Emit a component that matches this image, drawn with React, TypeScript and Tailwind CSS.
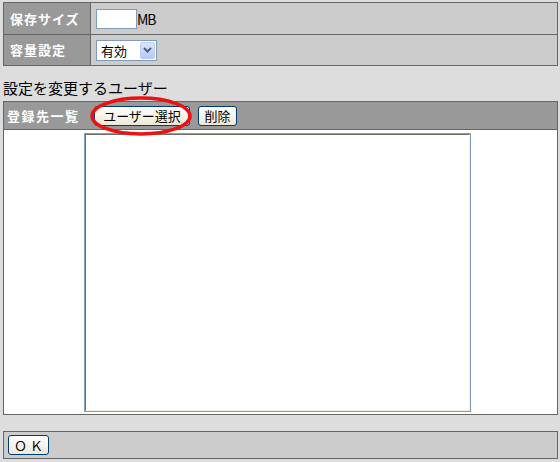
import React from "react";

const font = { fontFamily: '"Noto Sans CJK JP", "Noto Sans", sans-serif' };

const XpButton: React.FC<{ label: string; className?: string }> = ({
  label,
  className,
}) => (
  <button
    type="button"
    className={
      "flex h-[20px] items-center justify-center rounded-[3px] border border-[#003c74] bg-gradient-to-b from-white to-[#ece9d8] text-[13px] leading-none text-black " +
      (className ?? "")
    }
  >
    {label}
  </button>
);

const LabelCell: React.FC<{ children: React.ReactNode }> = ({ children }) => (
  <div className="flex items-center bg-[#999999] pl-[6px] text-[13px] font-bold tracking-[1px] text-white">
    {children}
  </div>
);

export default function App() {
  return (
    <div
      className="h-[462px] w-[560px] overflow-hidden bg-[#dddddd] pt-[2px] pl-[3px] text-black"
      style={font}
    >
      {/* settings table */}
      <div className="w-[555px] border border-[#666666]">
        <div className="grid h-[32px] grid-cols-[86px_1fr] border-b border-[#666666]">
          <LabelCell>保存サイズ</LabelCell>
          <div className="flex items-center border-l border-[#666666] bg-[#cccccc] pl-[5px]">
            <div className="h-[20px] w-[41px] border border-[#7f9db9] bg-white" />
            <span className="text-[14px] leading-none tracking-[-1px]">MB</span>
          </div>
        </div>
        <div className="grid h-[30px] grid-cols-[86px_1fr]">
          <LabelCell>容量設定</LabelCell>
          <div className="flex items-center border-l border-[#666666] bg-[#cccccc] pl-[5px]">
            <div className="flex h-[21px] w-[61px] items-center border border-[#7f9db9] bg-white pr-[1px]">
              <span className="flex-1 pl-[4px] text-[13px] leading-none">有効</span>
              <div className="flex h-[17px] w-[15px] items-center justify-center rounded-[2px] border border-[#b9cdf7] bg-gradient-to-b from-[#dce6fc] to-[#b5c9f6]">
                <svg width="9" height="6" viewBox="0 0 9 6">
                  <path d="M1 1 L4.5 4.5 L8 1" fill="none" stroke="#4d6185" strokeWidth="2" />
                </svg>
              </div>
            </div>
          </div>
        </div>
      </div>

      <div className="mt-[12px] h-[20px] text-[15px] leading-[20px]">
        設定を変更するユーザー
      </div>

      {/* user list table */}
      <div className="mt-[3px] w-[555px] border border-[#666666]">
        <div className="flex h-[28px] items-center border-b border-[#666666] bg-[#999999]">
          <div className="w-[86px] pl-[3px] text-[13px] font-bold tracking-[1.5px] text-white">
            登録先一覧
          </div>
          <div className="relative ml-[4px]">
            <XpButton label="ユーザー選択" className="w-[96px]" />
            <svg
              className="pointer-events-none absolute left-[-4px] top-[-10px]"
              width="102"
              height="40"
              viewBox="0 0 102 40"
            >
              <ellipse cx="51" cy="20" rx="49" ry="18" fill="none" stroke="#ee1111" strokeWidth="3.5" />
            </svg>
          </div>
          <XpButton label="削除" className="ml-[8px] w-[39px]" />
        </div>
        <div className="h-[284px] bg-white pt-[3px] pl-[80px]">
          <div className="h-[279px] w-[387px] border border-[#7f9db9]">
            <div className="h-full w-full border border-t-[#716f64] border-l-[#716f64] border-r-[#f1efe2] border-b-[#f1efe2]" />
          </div>
        </div>
      </div>

      {/* footer */}
      <div className="mt-[16px] flex h-[28px] w-[555px] items-center border border-[#666666] bg-[#cccccc] pl-[4px]">
        <XpButton label="Ｏ Ｋ" className="w-[41px] text-[12px]" />
      </div>
    </div>
  );
}
